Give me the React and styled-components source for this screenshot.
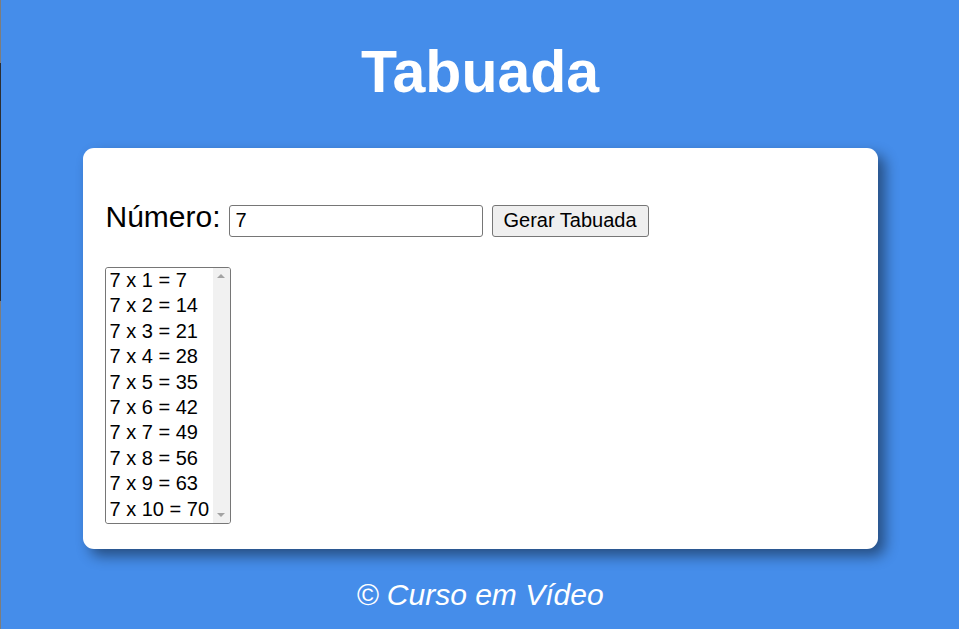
import React from "react";
import styled, { createGlobalStyle } from "styled-components";

const GlobalStyle = createGlobalStyle`
  html, body {
    margin: 0;
    padding: 0;
  }
  body {
    font-family: "Liberation Sans", Arial, sans-serif;
    background: #458dea;
  }
`;

const Page = styled.div`
  min-height: 100vh;
  box-sizing: border-box;
  padding: 39px 0 0 1px;
  background:
    linear-gradient(#2b2e33, #2b2e33) 0 63px / 1px 238px no-repeat,
    linear-gradient(#7d7d7d, #7d7d7d) 0 0 / 1px 100% no-repeat,
    #458dea;
`;

const Title = styled.h1`
  margin: 0;
  text-align: center;
  color: #ffffff;
  font-size: 59px;
  line-height: 66px;
  font-weight: bold;
`;

const Card = styled.section`
  box-sizing: border-box;
  width: 795px;
  margin: 43px auto 0;
  padding: 22px 22px 25px 22px;
  background: #ffffff;
  border-radius: 11px;
  box-shadow: 7px 7px 14px rgba(0, 0, 0, 0.45);
`;

const Row = styled.div`
  display: flex;
  align-items: baseline;
  margin-top: 31px;
`;

const Label = styled.label`
  font-size: 30px;
  line-height: 32px;
  color: #000;
  margin-left: 1px;
  margin-right: 8px;
`;

const NumberInput = styled.input`
  box-sizing: border-box;
  width: 254px;
  height: 32px;
  padding: 0 6px;
  border: 1px solid #767676;
  border-radius: 3px;
  font-family: "Liberation Sans", Arial, sans-serif;
  font-size: 20px;
  color: #000;
  background: #fff;
  outline: none;
  -moz-appearance: textfield;
  &::-webkit-outer-spin-button,
  &::-webkit-inner-spin-button {
    -webkit-appearance: none;
    margin: 0;
  }
`;

const Button = styled.button`
  box-sizing: border-box;
  width: 157px;
  height: 32px;
  margin-left: 9px;
  padding: 0;
  border: 1px solid #767676;
  border-radius: 3px;
  background: #efefef;
  font-family: "Liberation Sans", Arial, sans-serif;
  font-size: 20px;
  color: #000;
`;

const ListFrame = styled.div`
  display: flex;
  box-sizing: border-box;
  width: 126px;
  height: 257px;
  margin-top: 30px;
  border: 1px solid #767676;
  border-radius: 3px;
  overflow: hidden;
  background: #fff;
`;

const List = styled.select`
  flex: 1;
  min-width: 0;
  height: 100%;
  margin: 0;
  padding: 0;
  border: none;
  font-family: "Liberation Sans", Arial, sans-serif;
  font-size: 20px;
  color: #000;
  background: #fff;
  overflow: hidden;
  outline: none;
  scrollbar-width: none;

  option {
    box-sizing: border-box;
    height: 25.4px;
    padding: 1.5px 0 0 4px;
    line-height: 23px;
    color: #000;
  }
`;

const ScrollRail = styled.div`
  display: flex;
  flex-direction: column;
  justify-content: space-between;
  width: 17px;
  background: #f1f1f1;
`;

const ArrowButton = styled.div`
  display: flex;
  align-items: center;
  justify-content: center;
  height: 17px;

  &::before {
    content: "";
    width: 0;
    height: 0;
    border-left: 4px solid transparent;
    border-right: 4px solid transparent;
    ${({ $dir }) =>
      $dir === "up"
        ? "border-bottom: 4px solid #a3a3a3; margin-top: -1px;"
        : "border-top: 4px solid #a3a3a3; margin-top: 1px;"}
  }
`;

const Footer = styled.footer`
  margin-top: 29px;
  text-align: center;
  color: #ffffff;
  font-style: italic;
  font-size: 30px;
  line-height: 34px;
`;

export default function App() {
  const n = 7;
  const rows = Array.from({ length: 10 }, (_, i) => i + 1);
  return (
    <>
      <GlobalStyle />
      <Page>
        <Title>Tabuada</Title>
        <Card>
          <Row>
            <Label htmlFor="txtn">Número:</Label>
            <NumberInput id="txtn" type="number" defaultValue={n} />
            <Button type="button">Gerar Tabuada</Button>
          </Row>
          <ListFrame>
            <List size={10}>
              {rows.map((i) => (
                <option key={i} value={`tab${i}`}>
                  {`${n} x ${i} = ${n * i}`}
                </option>
              ))}
            </List>
            <ScrollRail aria-hidden="true">
              <ArrowButton $dir="up" />
              <ArrowButton $dir="down" />
            </ScrollRail>
          </ListFrame>
        </Card>
        <Footer>© Curso em Vídeo</Footer>
      </Page>
    </>
  );
}
